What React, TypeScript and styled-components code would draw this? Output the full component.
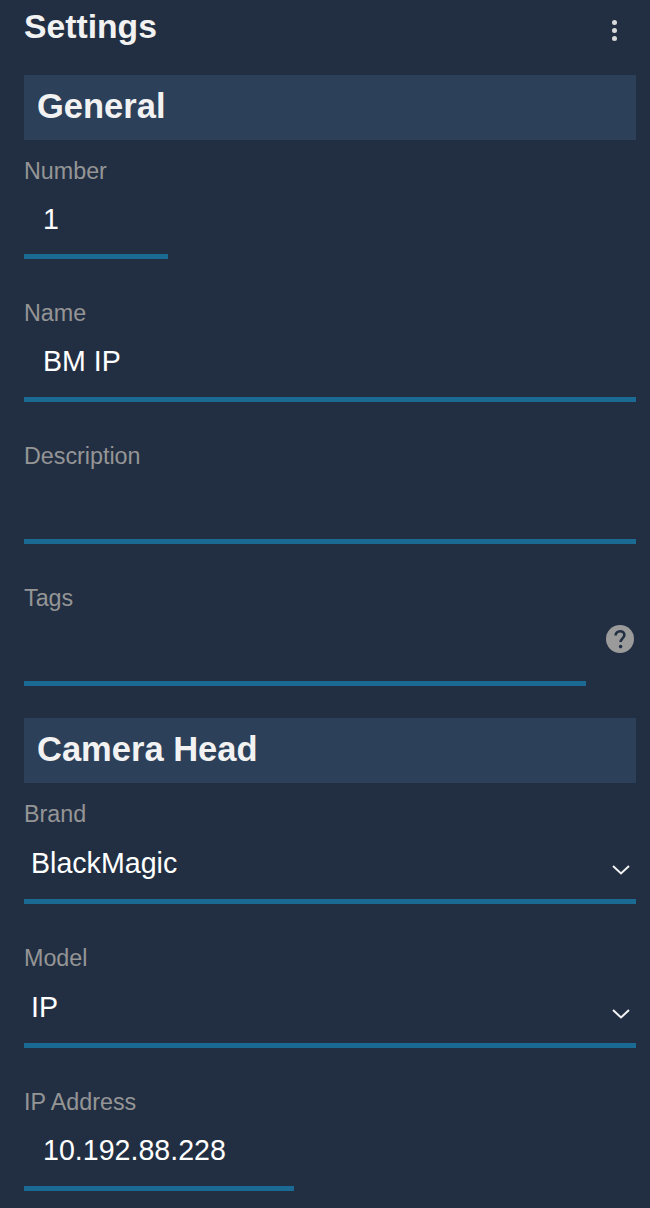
import React from 'react'
import styled, { createGlobalStyle } from 'styled-components'

const GlobalStyle = createGlobalStyle`
  html, body {
    margin: 0;
    padding: 0;
    background: #222f43;
  }
  * {
    box-sizing: border-box;
  }
`

function Chevron() {
  return (
    <ChevronIcon viewBox="0 0 18 12" fill="none" stroke="#f2f2f2" strokeWidth="2">
      <path d="M1 2l8 7.500 8-7.500" />
    </ChevronIcon>
  )
}

function Help() {
  return (
    <HelpIcon viewBox="0 0 28 28">
      <circle cx="14" cy="14" r="14" fill="#9b9b9b" />
      <path
        d="M9.600 10.600c0-2.600 2-4.400 4.500-4.400s4.300 1.700 4.300 3.900c0 3.200-3.800 3.400-3.800 6.900"
        fill="none"
        stroke="#222f43"
        strokeWidth="2.600"
      />
      <circle cx="14.600" cy="21.600" r="1.800" fill="#222f43" />
    </HelpIcon>
  )
}

export default function App() {
  return (
    <Page>
      <GlobalStyle />
      <TitleRow>
        <Title>Settings</Title>
        <MenuButton>
          <Dot />
          <Dot />
          <Dot />
        </MenuButton>
      </TitleRow>

      <Section>General</Section>
      <Fields>
        <Field>
          <Label>Number</Label>
          <Value $width={144}>1</Value>
        </Field>
        <Field>
          <Label>Name</Label>
          <Value>BM IP</Value>
        </Field>
        <Field>
          <Label>Description</Label>
          <Value />
        </Field>
        <Field>
          <Label>Tags</Label>
          <TagsRow>
            <Value $width={562} />
            <Help />
          </TagsRow>
        </Field>
      </Fields>

      <Section>Camera Head</Section>
      <Fields>
        <Field>
          <Label>Brand</Label>
          <SelectValue>
            BlackMagic
            <Chevron />
          </SelectValue>
        </Field>
        <Field>
          <Label>Model</Label>
          <SelectValue>
            IP
            <Chevron />
          </SelectValue>
        </Field>
        <Field>
          <Label>IP Address</Label>
          <Value $width={270}>10.192.88.228</Value>
        </Field>
      </Fields>
    </Page>
  )
}

///////////////////////////////////////////////////////////////////////////////////

const Page = styled.div`
  width: 650px;
  height: 1208px;
  overflow: hidden;
  padding: 0 14px 0 24px;
  background: #222f43;
  font-family: 'Liberation Sans', Arial, sans-serif;
  color: #fff;
`

const TitleRow = styled.div`
  display: flex;
  align-items: center;
  justify-content: space-between;
  height: 75px;
  padding-bottom: 22px;
`

const Title = styled.h1`
  margin: 0;
  font-size: 33.700px;
  font-weight: 700;
  color: #f2f2f2;
`

const MenuButton = styled.div`
  display: flex;
  flex-direction: column;
  gap: 3px;
  margin-right: 19px;
  margin-top: 8px;
`

const Dot = styled.span`
  width: 5px;
  height: 5px;
  border-radius: 50%;
  background: #d9d9d9;
`

const Section = styled.h2`
  display: flex;
  align-items: center;
  height: 65px;
  margin: 0;
  padding: 0 0 2px 13px;
  background: #2c405a;
  font-size: 34.500px;
  font-weight: 700;
  color: #f2f2f2;
`

const Fields = styled.div`
  display: flex;
  flex-direction: column;
  gap: 41px;
  padding: 18px 0 32px;
`

const Field = styled.div`
  display: flex;
  flex-direction: column;
`

const Label = styled.div`
  height: 27px;
  line-height: 27px;
  font-size: 23.300px;
  color: #959595;
`

const Value = styled.div<{ $width?: number }>`
  width: ${(p) => (p.$width ? `${p.$width}px` : '100%')};
  height: 74.330px;
  padding: 12px 0 0 19px;
  border-bottom: 5px solid #1a6a94;
  line-height: 44px;
  font-size: 28.600px;
  color: #fff;
`

const SelectValue = styled(Value)`
  display: flex;
  justify-content: space-between;
  height: 76px;
  padding-top: 13px;
  padding-left: 7px;
  padding-right: 6px;
`

const TagsRow = styled.div`
  position: relative;
`

const HelpIcon = styled.svg`
  position: absolute;
  top: 13px;
  right: 2px;
  width: 28px;
  height: 28px;
`

const ChevronIcon = styled.svg`
  width: 18px;
  height: 12px;
  margin-top: 23px;
`
